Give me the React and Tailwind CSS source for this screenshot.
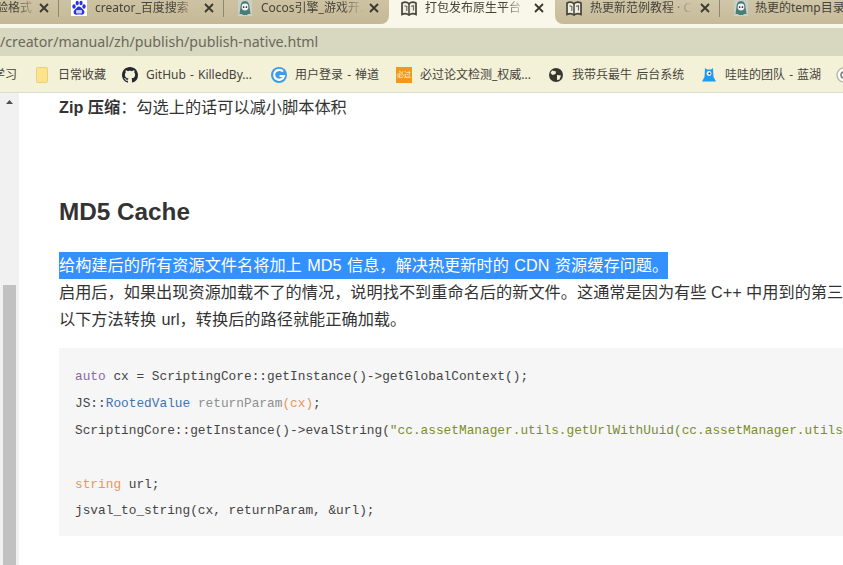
import React from "react";

function BookIcon() {
  return (
    <svg width="16" height="15" viewBox="0 0 16 15" className="shrink-0">
      <path d="M1 2 C3.5 0.8 6 1 8 2.6 C10 1 12.5 0.8 15 2 V13.4 C12.5 12.2 10 12.4 8 14 C6 12.4 3.5 12.2 1 13.4 Z" fill="#f1eee0" stroke="#45453e" strokeWidth="1.7" />
      <path d="M8 2.6 V14" stroke="#45453e" strokeWidth="1.5" />
      <path d="M3.5 4.8 L5.8 5.4 V10 M10.2 5.4 L12.5 4.8 V9.5" fill="none" stroke="#66665c" strokeWidth="1.1" />
    </svg>
  );
}

function CocosIcon() {
  return (
    <svg width="14" height="16" viewBox="0 0 14 16" className="shrink-0">
      <rect width="14" height="16" fill="#c9d0c4" />
      <path d="M7 1 C10 1 11.5 4 11.5 7 L12.5 14 H10 L9 15 H5 L4 14 H1.5 L2.5 7 C2.5 4 4 1 7 1 Z" fill="#4a7d78" />
      <circle cx="7" cy="7" r="3.4" fill="#f2f5f2" />
      <circle cx="5.6" cy="7.1" r="0.9" fill="#1c3533" />
      <circle cx="8.4" cy="7.1" r="0.9" fill="#1c3533" />
    </svg>
  );
}

function BaiduIcon() {
  return (
    <svg width="16" height="16" viewBox="0 0 16 16" className="shrink-0">
      <rect width="16" height="16" fill="#ffffff" />
      <g fill="#2932e1">
        <ellipse cx="3" cy="6.5" rx="1.7" ry="2.2" />
        <ellipse cx="6.2" cy="3" rx="1.6" ry="2.2" />
        <ellipse cx="10" cy="3" rx="1.6" ry="2.2" />
        <ellipse cx="13" cy="6.5" rx="1.7" ry="2.2" />
        <path d="M8 6.5 C10 6.5 10.5 8.5 12.5 10 C14.5 12 13 15 10.5 14.7 C9 14.4 7 14.4 5.5 14.7 C3 15 1.6 12 3.5 10 C5.5 8.5 6 6.5 8 6.5 Z" />
      </g>
      <rect x="5" y="10" width="6" height="3.6" rx="1" fill="#ffffff" opacity="0.75" />
    </svg>
  );
}

function CloseX() {
  return (
    <svg width="10" height="10" viewBox="0 0 10 10" className="shrink-0">
      <path d="M1 1 L9 9 M9 1 L1 9" stroke="#3a382e" strokeWidth="1.8" />
    </svg>
  );
}

function Tab({ icon, title, active, iconGap = "ml-[12px]", textGap = "ml-[8px]", width = "w-[165px]" }) {
  return (
    <div className={"relative flex h-[24px] shrink-0 items-start " + width}>
      <div className={iconGap + " flex h-[16px] w-[16px] shrink-0 items-center justify-center"}>{icon}</div>
      <div className={textGap + " w-[102px] shrink-0 overflow-hidden whitespace-nowrap text-[12px] leading-[16px] text-[#45433a] [mask-image:linear-gradient(to_right,black_78%,transparent)]"}>
        {title}
      </div>
      <div className="absolute left-[145px] top-[3px]">
        <CloseX />
      </div>
      {!active && <div className="absolute right-0 top-0 h-[17px] w-px bg-[#8f8871]" />}
    </div>
  );
}

function Folder() {
  return (
    <svg width="12" height="16" viewBox="0 0 12 16" className="shrink-0">
      <rect x="0.5" y="0.5" width="11" height="15" rx="1" fill="#fbe48c" stroke="#eccf78" />
    </svg>
  );
}

function Github() {
  return (
    <svg width="16" height="16" viewBox="0 0 16 16" className="shrink-0" fill="#24292e">
      <path d="M8 0C3.58 0 0 3.58 0 8c0 3.54 2.29 6.53 5.47 7.59.4.07.55-.17.55-.38 0-.19-.01-.82-.01-1.49-2.01.37-2.53-.49-2.69-.94-.09-.23-.48-.94-.82-1.13-.28-.15-.68-.52-.01-.53.63-.01 1.08.58 1.23.82.72 1.21 1.87.87 2.33.66.07-.52.28-.87.51-1.07-1.78-.2-3.64-.89-3.64-3.95 0-.87.31-1.59.82-2.15-.08-.2-.36-1.02.08-2.12 0 0 .67-.21 2.2.82.64-.18 1.32-.27 2-.27s1.36.09 2 .27c1.53-1.04 2.2-.82 2.2-.82.44 1.1.16 1.92.08 2.12.51.56.82 1.27.82 2.15 0 3.07-1.87 3.75-3.65 3.95.29.25.54.73.54 1.48 0 1.07-.01 1.93-.01 2.2 0 .21.15.46.55.38A8.01 8.01 0 0 0 16 8c0-4.42-3.58-8-8-8z" />
    </svg>
  );
}

function Chandao() {
  return (
    <svg width="16" height="16" viewBox="0 0 16 16" className="shrink-0">
      <circle cx="8" cy="8" r="8" fill="#3d9be9" />
      <path d="M12 4.6 A5 5 0 1 0 13 9 H8.5" fill="none" stroke="#ffffff" strokeWidth="2.2" />
    </svg>
  );
}

function Orange() {
  return (
    <div className="flex h-[16px] w-[16px] shrink-0 items-center justify-center overflow-hidden whitespace-nowrap bg-[#ef9a1e] text-[7px] leading-none text-[#fff3d8]">
      必过
    </div>
  );
}

function Globe() {
  return (
    <svg width="14" height="14" viewBox="0 0 14 14" className="shrink-0">
      <circle cx="7" cy="7" r="7" fill="#39382f" />
      <path d="M3 2.5 L7 3.5 L6.5 6 L3.5 7 L1.5 5 Z M8 7 L12 7.5 L10.5 11.5 L8 12 Z" fill="#f5f2dc" />
    </svg>
  );
}

function Monster() {
  return (
    <svg width="16" height="16" viewBox="0 0 16 16" className="shrink-0">
      <path d="M4 1 L6 2.5 H10 L12 1 L12.5 10 L15 14.5 H1 L3.5 10 Z" fill="#1e9bf0" />
      <circle cx="8" cy="6.5" r="2.4" fill="#ffffff" />
      <circle cx="8.4" cy="6.5" r="1.1" fill="#143a5c" />
    </svg>
  );
}

function Ring() {
  return (
    <svg width="16" height="16" viewBox="0 0 16 16" className="shrink-0">
      <circle cx="8" cy="8" r="7" fill="#ffffff" stroke="#b9b9b0" strokeWidth="1.5" />
      <circle cx="8" cy="8" r="3" fill="none" stroke="#7d7d75" strokeWidth="1.5" />
    </svg>
  );
}

function Bookmark({ icon, label, width, gap = "gap-[8px]" }) {
  return (
    <div className={"flex shrink-0 items-center " + gap}>
      {icon}
      <span className={"whitespace-nowrap text-[12px] leading-[16px] text-[#45433a] [word-spacing:1px] " + width}>{label}</span>
    </div>
  );
}

function CodeLine({ children }) {
  return <div className="h-[26.9px] whitespace-pre">{children}</div>;
}

export default function App() {
  return (
    <div className="flex h-[565px] w-[843px] flex-col overflow-hidden bg-white font-['Liberation_Sans','Noto_Sans_CJK_SC',sans-serif]">
      <div className="flex h-[28px] shrink-0 flex-col overflow-hidden bg-[#f8f7ea] font-['Noto_Sans','Noto_Sans_CJK_SC',sans-serif]">
        <div className="flex h-[24px] shrink-0">
          <div className="-ml-[106px] flex shrink-0 rounded-br-[8px] bg-gradient-to-b from-[#cdc2a3] to-[#c5b995]">
            <Tab title="在线代码校验格式" icon={<BookIcon />} textGap="ml-[14px]" />
            <Tab title="creator_百度搜索" icon={<BaiduIcon />} />
            <Tab title="Cocos引擎_游戏开发" icon={<CocosIcon />} iconGap="ml-[13px]" active />
          </div>
          <Tab title="打包发布原生平台" icon={<BookIcon />} active width="w-[166px]" />
          <div className="flex min-w-0 flex-1 rounded-bl-[8px] bg-gradient-to-b from-[#d0c6a8] to-[#c6ba97]">
            <Tab title="热更新范例教程 · Cocos" icon={<BookIcon />} iconGap="ml-[11px]" />
            <div className="flex h-[24px] min-w-0 flex-1 items-start overflow-hidden">
              <div className="ml-[13px] flex h-[16px] w-[16px] shrink-0 items-center justify-center">
                <CocosIcon />
              </div>
              <span className="ml-[6px] whitespace-nowrap text-[12px] leading-[16px] text-[#45433a]">热更的temp目录</span>
            </div>
          </div>
        </div>
      </div>

      <div className="flex h-[28px] shrink-0 items-center overflow-hidden bg-[#d8d7bf] pb-[1px] font-['Noto_Sans',sans-serif] text-[14.2px] text-[#6a695a]">
        /creator/manual/zh/publish/publish-native.html
      </div>

      <div className="flex h-[37px] shrink-0 items-center gap-[16px] overflow-hidden border-b border-[#dcdccb] bg-[#f4f1d9] pt-[1px] font-['Noto_Sans','Noto_Sans_CJK_SC',sans-serif]">
        <span className="-ml-[7px] mr-[3px] shrink-0 whitespace-nowrap text-[12px] leading-[16px] text-[#45433a]">学习</span>
        <Bookmark icon={<Folder />} label="日常收藏" width="w-[48px]" gap="gap-[10px]" />
        <Bookmark icon={<Github />} label="GitHub - KilledBy..." width="w-[109px]" />
        <Bookmark icon={<Chandao />} label="用户登录 - 禅道" width="w-[85px]" />
        <Bookmark icon={<Orange />} label="必过论文检测_权威..." width="w-[113px]" />
        <Bookmark icon={<Globe />} label="我带兵最牛 后台系统" width="w-[113px]" gap="gap-[9px]" />
        <Bookmark icon={<Monster />} label="哇哇的团队 - 蓝湖" width="w-[95px]" />
        <Ring />
      </div>

      <div className="flex min-h-0 flex-1">
        <div className="flex w-[19px] shrink-0 flex-col justify-between bg-[#f1f1f1]">
          <svg width="19" height="20" viewBox="0 0 19 20" className="shrink-0">
            <path d="M9.5 7 L13 11 H6 Z" fill="#505050" />
          </svg>
          <div className="ml-[3px] h-[280px] w-[13px] bg-[#c1c1c1]" />
        </div>

        <div className="min-w-0 flex-1 overflow-hidden pl-[40px] text-[16.2px] leading-[27px] text-[#333333]">
          <p className="mt-[1px] whitespace-nowrap">
            <strong className="font-bold">Zip 压缩</strong>：勾选上的话可以减小脚本体积
          </p>

          <h2 className="mt-[76px] text-[24.3px] leading-[30px] font-bold">MD5 Cache</h2>

          <p className="mt-[25px] whitespace-nowrap">
            <span className="inline-block h-[27px] bg-[#3390ff] text-white [word-spacing:1px]">给构建后的所有资源文件名将加上 MD5 信息，解决热更新时的 CDN 资源缓存问题。</span>
          </p>
          <p className="whitespace-nowrap">启用后，如果出现资源加载不了的情况，说明找不到重命名后的新文件。这通常是因为有些 C++ 中用到的第三</p>
          <p className="whitespace-nowrap [word-spacing:1px]">以下方法转换 url，转换后的路径就能正确加载。</p>

          <pre className="mt-[15px] h-[188px] overflow-hidden bg-[#f6f6f7] pt-[16px] pl-[16px] font-['Liberation_Mono',monospace] text-[12.8px] leading-[26.9px] text-[#444444]">
            <CodeLine><span className="text-[#8a6aa0]">auto</span> cx = ScriptingCore::getInstance()-&gt;getGlobalContext();</CodeLine>
            <CodeLine>JS::<span className="text-[#4271ae]">RootedValue</span> <span className="text-[#8e908c]">returnParam</span><span className="text-[#e8975a]">(cx)</span>;</CodeLine>
            <CodeLine>ScriptingCore::getInstance()-&gt;evalString(<span className="text-[#7c8c2e]">"cc.assetManager.utils.getUrlWithUuid(cc.assetManager.utils</span></CodeLine>
            <CodeLine> </CodeLine>
            <CodeLine><span className="text-[#e8975a]">string</span> url;</CodeLine>
            <CodeLine>jsval_to_string(cx, returnParam, &amp;url);</CodeLine>
          </pre>
        </div>
      </div>
    </div>
  );
}
